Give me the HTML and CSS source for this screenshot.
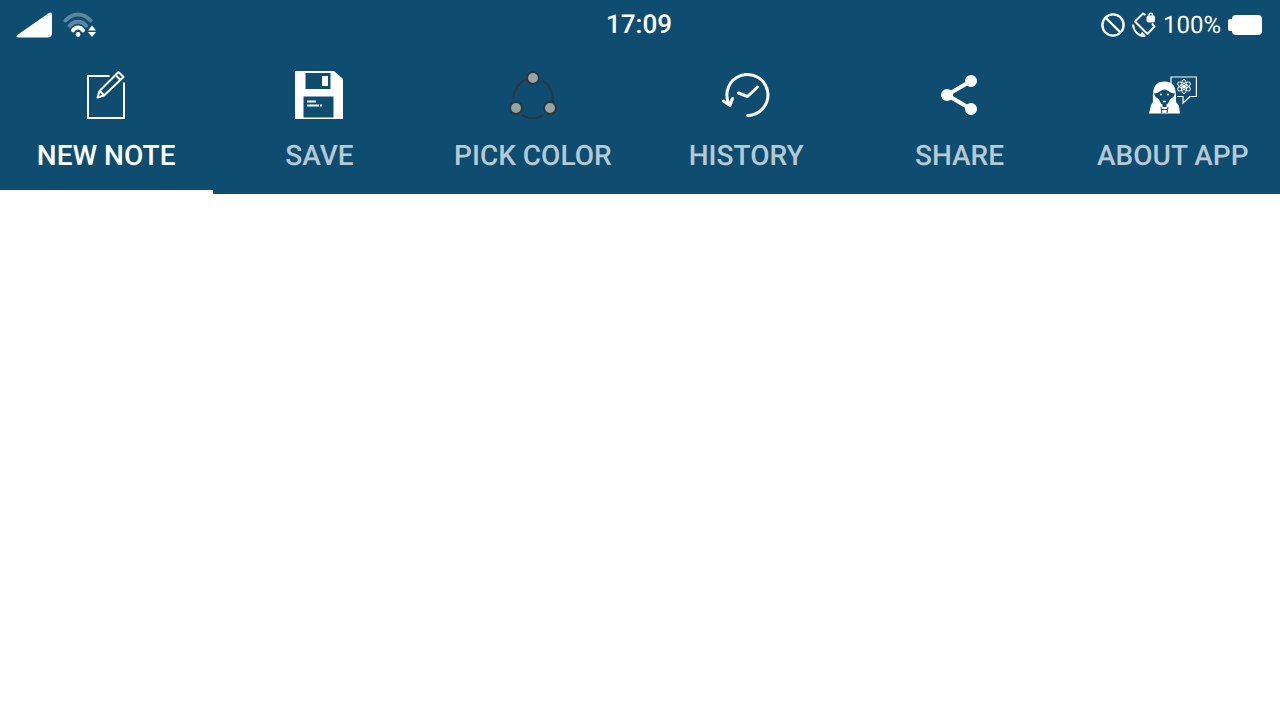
FILE: index.html
```html
<!DOCTYPE html>
<html lang="en">
<head>
  <meta charset="UTF-8">
  <meta name="viewport" content="width=device-width, initial-scale=1">
  <title>Notes</title>
  <link rel="stylesheet" href="styles.css">
</head>
<body>
  <header class="header">
    <div class="status">
      <div class="status-left">
        <svg class="signal" width="36" height="26" viewBox="0 0 36 26" aria-hidden="true">
          <path d="M2 22.600 32.500 1.200Q36 -.8 36 3V21Q36 25.500 31.500 25.500H2Q-1 25 2 22.600Z" fill="#fff"/>
        </svg>
        <svg width="34" height="26" viewBox="0 0 34 26" fill="none" stroke="#fff" stroke-width="4" aria-hidden="true">
          <g opacity=".32" stroke-linecap="round">
            <path d="M2.500 8.500C10 .5 20 .5 27.500 8.500"/>
            <path d="M6.800 13.600C11.500 8.600 18.500 8.600 23.200 13.600"/>
          </g>
          <path d="M10 18.400C12.500 14.600 17.500 14.600 20 18.400" stroke-linecap="round"/>
          <circle cx="15" cy="22.500" r="2.400" fill="#fff" stroke="none"/>
          <path d="M29 13.500 33 18.500H25ZM29 25 25 20H33Z" fill="#fff" stroke="none"/>
        </svg>
      </div>
      <time class="clock">17:09</time>
      <div class="status-right">
        <svg width="24" height="26" viewBox="0 0 24 26" fill="none" stroke="#fff" stroke-width="2.400" aria-hidden="true">
          <circle cx="12" cy="13" r="10.600"/>
          <path d="M4.500 5.500 19.500 20.500"/>
        </svg>
        <svg width="24" height="26" viewBox="0 0 24 26" fill="none" stroke="#fff" stroke-width="2" stroke-linejoin="round" aria-hidden="true">
          <path d="M13.500 3 11 1.500 3 9.500 15.500 22 22.500 14.500 20 11.500"/>
          <path d="M1 12.500C1.500 19 6 24 12.500 24L9.500 20.500"/>
          <rect x="15.500" y="4.500" width="6.500" height="5" rx="1" fill="#fff"/>
          <path d="M17 4.500V3a1.800 1.800 0 0 1 3.600 0V4.500" stroke-width="1.400"/>
        </svg>
        <span class="percent">100%</span>
        <svg width="34" height="26" viewBox="0 0 34 26" fill="#fff" aria-hidden="true">
          <rect x="4" y="3" width="30" height="20" rx="4"/>
          <rect x="0" y="7" width="8" height="12" rx="2"/>
        </svg>
      </div>
    </div>

    <nav class="tabs">
      <button class="tab active" type="button">
        <svg class="icon" viewBox="0 0 48 48" fill="none" stroke="#fff" stroke-width="2" aria-hidden="true">
          <path d="M27.500 5H6V47H42V11.500"/>
          <path d="M36.500 1 41.500 6 22 24.500 15.500 26.500 17.500 20Z" stroke-linejoin="round"/>
          <path d="M33.500 4 38.500 9M18 20 22 24.500"/>
        </svg>
        <span>NEW NOTE</span>
      </button>
      <button class="tab" type="button">
        <svg class="icon" viewBox="0 0 48 48" fill="#fff" aria-hidden="true">
          <path fill-rule="evenodd" d="M0 0H39L48 8V48H0ZM10.500 2V18H35.500V2ZM8.500 25.500V46.500H38.500V25.500Z"/>
          <path d="M27 5H33V15H27ZM12 29.500H21V31.500H12ZM12 33.500H24V35.500H12ZM25 33.500H27V35.500H25Z"/>
        </svg>
        <span>SAVE</span>
      </button>
      <button class="tab" type="button">
        <svg class="icon" viewBox="0 0 48 48" fill="none" stroke="#2b353c" stroke-width="2" aria-hidden="true">
          <path d="M4.500 26.500A20 20 0 0 1 18 8.500M34.500 10.500A20 20 0 0 1 43.500 31M13 44A20 20 0 0 0 33.500 44.500" stroke-linecap="round"/>
          <g fill="#95a5a5">
            <circle cx="24" cy="7" r="6"/>
            <circle cx="7" cy="37" r="6"/>
            <circle cx="41" cy="37" r="6"/>
          </g>
        </svg>
        <span>PICK COLOR</span>
      </button>
      <button class="tab" type="button">
        <svg class="icon" viewBox="0 0 48 48" fill="none" stroke="#fff" stroke-width="3" stroke-linecap="round" stroke-linejoin="round" aria-hidden="true">
          <path d="M7 33A20.500 20.500 0 1 1 25.500 44.500"/>
          <path d="M1.500 30 8 34.500 10.500 27.500M16.500 22 25.500 25.500 35.500 16"/>
        </svg>
        <span>HISTORY</span>
      </button>
      <button class="tab" type="button">
        <svg class="icon" viewBox="0 0 48 48" fill="#fff" aria-hidden="true">
          <path d="M36 10 12 24 36 38" fill="none" stroke="#fff" stroke-width="4"/>
          <circle cx="12" cy="24" r="6"/>
          <circle cx="36" cy="10" r="6"/>
          <circle cx="36" cy="38" r="6"/>
        </svg>
        <span>SHARE</span>
      </button>
      <button class="tab" type="button">
        <svg class="icon" viewBox="0 0 48 48" fill="none" stroke="#fff" aria-hidden="true">
          <path d="M0 42.500 2 34 4 31C4 22 3 10.500 15.500 10.500S27 22 27 31L30 35 31 42.500Z" fill="#fff" stroke="none"/>
          <path d="M5 22.500C10 22.500 12 18.500 15.500 18.500S21 22.500 26 22.500C25 26.500 22.500 27 21 28.500C20 31 19 33 17.500 33.500V36H13.500V33.500C12 33 11 31 10 28.500C8.500 27 6 26.500 5 22.500Z" fill="#0e4c70" stroke="none"/>
          <path d="M11 23.500H13M18 23.500H20M14 30.500H17" stroke-width="1.600"/>
          <path d="M12 36 13 42M19 36 18 42M12.500 38.500H18.500" stroke="#0e4c70"/>
          <path d="M22 14V6H47.400V25.500H41L34 32V25.500H28" stroke-width="1.200"/>
          <g stroke-width="1">
            <ellipse cx="35" cy="15.500" rx="2.800" ry="7"/>
            <ellipse cx="35" cy="15.500" rx="2.800" ry="7" transform="rotate(60 35 15.500)"/>
            <ellipse cx="35" cy="15.500" rx="2.800" ry="7" transform="rotate(120 35 15.500)"/>
            <circle cx="35" cy="15.500" r="1.500" fill="#fff"/>
          </g>
        </svg>
        <span>ABOUT APP</span>
      </button>
    </nav>
  </header>

  <main class="note"></main>
</body>
</html>
```
FILE: styles.css
```css
:root {
  --blue: #0e4c70;
  --muted: #b6c9d4;
}

* {
  box-sizing: border-box;
  margin: 0;
  padding: 0;
}

body {
  min-height: 100vh;
  background: #fff;
  font-family: Roboto, sans-serif;
  text-rendering: geometricPrecision;
  color: #fff;
}

svg {
  display: block;
  flex: none;
}

.header {
  background: var(--blue);
}

.status {
  display: grid;
  grid-template-columns: 1fr auto 1fr;
  align-items: center;
  height: 50px;
  padding: 0 18px 0 16px;
}

.status-left,
.status-right {
  display: flex;
  align-items: center;
}

.status-left {
  gap: 11px;
}

.status-right {
  justify-content: flex-end;
  gap: 7px;
}

.clock {
  font-size: 26px;
  font-weight: 500;
}

.percent {
  font-size: 24px;
}

.tabs {
  display: grid;
  grid-template-columns: repeat(6, 1fr);
}

.tab {
  display: flex;
  flex-direction: column;
  align-items: center;
  gap: 20px;
  padding: 21px 1px 18px 0;
  border: none;
  border-bottom: 4px solid transparent;
  background: none;
  color: var(--muted);
  font-family: inherit;
  font-size: 28px;
  font-weight: 500;
  line-height: 33px;
  text-rendering: inherit;
  white-space: nowrap;
  cursor: pointer;
}

.tab.active {
  border-bottom-color: #fff;
  color: #fff;
}

.icon {
  width: 48px;
  height: 48px;
}

.note {
  background: #fff;
}
```
